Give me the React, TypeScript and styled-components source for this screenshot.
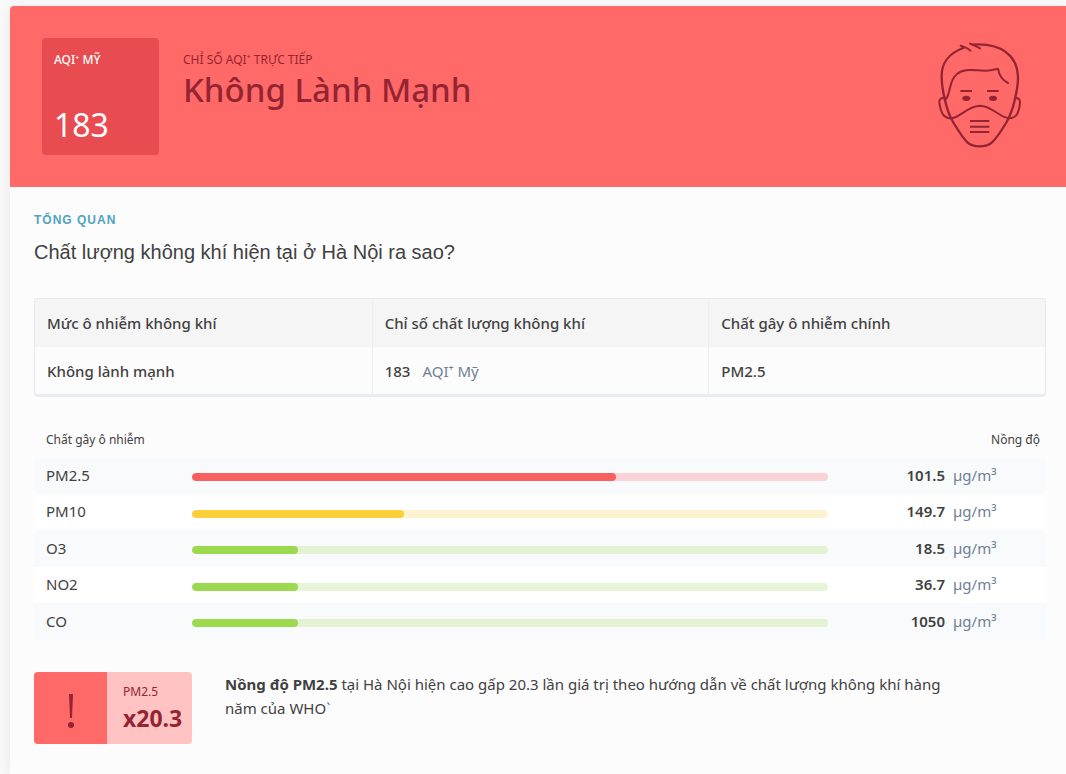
import React from "react";
import styled, { createGlobalStyle } from "styled-components";

const GlobalStyle = createGlobalStyle`
  * { box-sizing: border-box; }
  body {
    margin: 0;
    background: #fafafa;
    color: #414141;
    font-family: "Noto Sans", "Open Sans", sans-serif;
    font-size: 15px;
    line-height: 24px;
  }
  h1, h2, p { margin: 0; }
  table { width: 100%; border-collapse: separate; border-spacing: 0; }
  td, th { padding: 0; text-align: left; font-weight: 400; }
`;

const Page = styled.main`
  padding: 6px 0 0 10px;
  min-height: 100vh;
  display: flex;
  overflow: hidden;
`;

const Card = styled.article`
  flex: 1;
  min-width: 0;
  background: #fcfcfc;
  border-top-left-radius: 4px;
  box-shadow: 0 2px 16px rgba(0, 0, 0, 0.08);
`;

const Banner = styled.header`
  display: flex;
  align-items: center;
  padding: 32px 44px 32px 32px;
  background: #ff6a69;
  border-top-left-radius: 4px;
  color: #942431;
`;

const ScoreTile = styled.div`
  display: flex;
  flex-direction: column;
  justify-content: space-between;
  width: 117px;
  height: 117px;
  padding: 12px 12px 8px;
  border-radius: 4px;
  background: #e84b50;
  color: #fff;
`;

const TileLabel = styled.span`
  font-size: 12px;
  font-weight: 500;
  line-height: 20px;
`;

const Score = styled.span`
  font-size: 32px;
  line-height: 44px;
`;

const Status = styled.div`
  flex: 1;
  align-self: flex-start;
  padding: 12px 24px 0;
`;

const StatusLabel = styled.p`
  font-size: 12px;
  line-height: 20px;
`;

const StatusTitle = styled.h1`
  font-size: 33px;
  font-weight: 500;
  line-height: 40px;
`;

const Content = styled.section`
  padding: 25px 20px 32px 24px;
`;

const Eyebrow = styled.p`
  color: #4fa3c0;
  font-family: "Liberation Sans", Arial, sans-serif;
  font-size: 12px;
  font-weight: 700;
  letter-spacing: 1px;
  line-height: 16px;
`;

const Question = styled.h2`
  padding-top: 8px;
  font-family: "Liberation Sans", Arial, sans-serif;
  font-size: 20px;
  font-weight: 400;
  line-height: 32px;
`;

const Summary = styled.div`
  margin-top: 30px;
  border: 1px solid #e6e8ea;
  border-bottom: 3px solid #e9edf1;
  border-radius: 4px;
  overflow: hidden;

  table { table-layout: fixed; }
  th, td {
    height: 48px;
    padding: 0 12px;
    font-weight: 500;
  }
  td { height: 47px; padding-top: 1px; }
  th { background: #f5f5f5; }
  th + th, td + td { border-left: 1px solid #ebeff4; }
`;

const Unit = styled.span<{ $gap?: number }>`
  margin-left: ${(p) => p.$gap ?? 0}px;
  color: #718096;
  font-weight: 400;
`;

const Pollutants = styled.table`
  margin-top: 31px;
  table-layout: fixed;

  thead th {
    height: 29px;
    padding: 0 6px 5px 12px;
    font-size: 12px;
    line-height: 16px;
  }
  thead th:last-child { text-align: right; }
  tbody th, tbody td { padding-bottom: 2px; }
  tbody th { padding-left: 12px; }
  tbody tr { height: 37px; background: #f8fafc; }
  tbody tr:nth-child(even) { height: 36px; background: #fff; }
`;

const Col = styled.col<{ $width?: number }>`
  width: ${(p) => (p.$width ? `${p.$width}px` : "auto")};
`;

const Value = styled.td`
  && { text-align: right; font-weight: 600; }
`;

const UnitCell = styled.td`
  && { padding-left: 8px; }
`;

const Track = styled.div<{ $color: string }>`
  height: 8px;
  margin-top: 5px;
  border-radius: 4px;
  background: ${(p) => p.$color};
  overflow: hidden;
`;

const Fill = styled.div<{ $color: string }>`
  height: 100%;
  border-radius: 4px;
  background: ${(p) => p.$color};
`;

const Notice = styled.div`
  display: flex;
  align-items: flex-start;
  gap: 33px;
  margin-top: 32px;
`;

const Badge = styled.div`
  display: flex;
  flex-shrink: 0;
  height: 72px;
  border-radius: 4px;
  overflow: hidden;
  background: #ffc3c3;
  color: #942431;
`;

const BadgeMark = styled.div`
  display: flex;
  align-items: center;
  justify-content: center;
  width: 73px;
  padding-top: 6px;
  background: #ff6a69;
`;

const BadgeBody = styled.div`
  display: flex;
  flex-direction: column;
  width: 85px;
  padding: 12px 0 0 16px;
`;

const BadgeLabel = styled.span`
  font-size: 12px;
  line-height: 16px;
`;

const BadgeValue = styled.strong`
  font-size: 23px;
  line-height: 36px;
`;

const NoticeText = styled.p`
  max-width: 748px;

  a { color: #3d7ab8; text-decoration: none; }
`;

const rows = [
  { name: "PM2.5", share: 66.67, color: "#fa5f60", track: "#f9d3d6", value: "101.5" },
  { name: "PM10", share: 33.33, color: "#fbcf39", track: "#fef3d0", value: "149.7" },
  { name: "O3", share: 16.67, color: "#9bd94e", track: "#e2f2d2", value: "18.5" },
  { name: "NO2", share: 16.67, color: "#9bd94e", track: "#e6f5d7", value: "36.7" },
  { name: "CO", share: 16.67, color: "#9bd94e", track: "#e2f2d2", value: "1050" },
];

const MaskedFace = () => (
  <svg
    width="86"
    height="111"
    viewBox="48 33 258 333"
    fill="none"
    stroke="#942431"
    strokeWidth="7"
    strokeLinecap="round"
    strokeLinejoin="round"
    aria-hidden="true"
  >
    <path d="M130 54 C85 70 64 102 65 140 C65 166 70 190 75 211 C82 241 90 261 99 276 C116 304 130 326 143 338 C152 346 165 349 179 349 C193 349 206 346 215 338 C229 325 244 303 260 276 C269 260 278 238 284 211 C290 186 295 165 294 140 C292 76 242 38 158 44" />
    <path d="M180 55 C171 49 161 46 150 41 L160 44" strokeWidth="6" />
    <path d="M130 53 L122 47 C134 51 144 54 151 62" strokeWidth="6" />
    <path d="M79 206 C93 184 87 150 111 132 C133 112 167 123 199 122 C216 122 225 118 234 116 C237 136 245 149 264 159" strokeWidth="6" />
    <path d="M75 205 C65 201 57 207 58 218 C60 233 63 246 70 255 C76 262 85 265 94 265 C123 261 143 228 180 227 C216 228 237 261 266 265 C276 265 286 261 291 253 C297 242 299 230 300 217 C300 206 292 202 285 206" strokeWidth="6" />
    <path d="M121 183H156M201 183H236M150 273H208M150 290H208M150 306H208" strokeWidth="6" strokeLinecap="butt" />
    <g fill="#942431" stroke="none">
      <ellipse cx="139" cy="205" rx="12" ry="8" />
      <ellipse cx="219" cy="205" rx="12" ry="8" />
    </g>
  </svg>
);

const Exclamation = () => (
  <svg width="10" height="36" viewBox="0 0 10 36" fill="#942431" aria-hidden="true">
    <path d="M3 1H7L6 25H4Z" />
    <circle cx="5" cy="32" r="3" />
  </svg>
);

export default function App() {
  return (
    <>
      <GlobalStyle />
      <Page>
        <Card>
          <Banner>
            <ScoreTile>
              <TileLabel>AQI⁺ MỸ</TileLabel>
              <Score>183</Score>
            </ScoreTile>
            <Status>
              <StatusLabel>CHỈ SỐ AQI⁺ TRỰC TIẾP</StatusLabel>
              <StatusTitle>Không Lành Mạnh</StatusTitle>
            </Status>
            <MaskedFace />
          </Banner>
          <Content>
            <Eyebrow>TỔNG QUAN</Eyebrow>
            <Question>Chất lượng không khí hiện tại ở Hà Nội ra sao?</Question>
            <Summary>
              <table>
                <thead>
                  <tr>
                    <th scope="col">Mức ô nhiễm không khí</th>
                    <th scope="col">Chỉ số chất lượng không khí</th>
                    <th scope="col">Chất gây ô nhiễm chính</th>
                  </tr>
                </thead>
                <tbody>
                  <tr>
                    <td>Không lành mạnh</td>
                    <td>
                      183<Unit $gap={12}>AQI⁺ Mỹ</Unit>
                    </td>
                    <td>PM2.5</td>
                  </tr>
                </tbody>
              </table>
            </Summary>
            <Pollutants>
              <colgroup>
                <Col $width={158} />
                <Col />
                <Col $width={117} />
                <Col $width={101} />
              </colgroup>
              <thead>
                <tr>
                  <th scope="col" colSpan={2}>Chất gây ô nhiễm</th>
                  <th scope="col" colSpan={2}>Nồng độ</th>
                </tr>
              </thead>
              <tbody>
                {rows.map((row) => (
                  <tr key={row.name}>
                    <th scope="row">{row.name}</th>
                    <td>
                      <Track $color={row.track}>
                        <Fill $color={row.color} style={{ width: `${row.share}%` }} />
                      </Track>
                    </td>
                    <Value>{row.value}</Value>
                    <UnitCell>
                      <Unit>µg/m³</Unit>
                    </UnitCell>
                  </tr>
                ))}
              </tbody>
            </Pollutants>
            <Notice>
              <Badge>
                <BadgeMark>
                  <Exclamation />
                </BadgeMark>
                <BadgeBody>
                  <BadgeLabel>PM2.5</BadgeLabel>
                  <BadgeValue>x20.3</BadgeValue>
                </BadgeBody>
              </Badge>
              <NoticeText>
                <strong>Nồng độ PM2.5</strong> tại Hà Nội hiện cao gấp 20.3 lần giá trị theo hướng dẫn về chất
                lượng không khí hàng năm của WHO<a href="#who">`</a>
              </NoticeText>
            </Notice>
          </Content>
        </Card>
      </Page>
    </>
  );
}
